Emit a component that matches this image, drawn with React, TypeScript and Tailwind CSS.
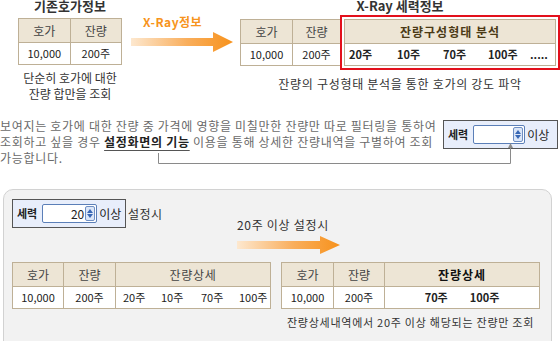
import React from 'react';

const FONT = { fontFamily: '"Noto Sans CJK KR", "Noto Sans", sans-serif' };

function Arrow({ w, h, id }: { w: number; h: number; id: string }) {
  const mid = h / 2;
  const head = 20;
  const shaft = 4;
  return (
    <svg width={w} height={h} viewBox={`0 0 ${w} ${h}`}>
      <defs>
        <linearGradient id={id} x1="0" x2="1" y1="0" y2="0">
          <stop offset="0" stopColor="#fde8cf" />
          <stop offset="0.55" stopColor="#f9ae5c" />
          <stop offset="1" stopColor="#f7921c" />
        </linearGradient>
      </defs>
      <path
        d={`M0 ${mid - shaft} H${w - head} V0 L${w} ${mid} L${w - head} ${h} V${mid + shaft} H0 Z`}
        fill={`url(#${id})`}
      />
    </svg>
  );
}

function Spinner() {
  return (
    <div className="flex h-[15px] w-[10px] shrink-0 flex-col items-center justify-center gap-[1px] rounded-[2px] border border-[#6f8fc4] bg-[#dbe6f8]">
      <svg width="6" height="4" viewBox="0 0 6 4">
        <path d="M0 4 L3 0 L6 4 Z" fill="#3867b5" />
      </svg>
      <svg width="6" height="4" viewBox="0 0 6 4">
        <path d="M0 0 L3 4 L6 0 Z" fill="#3867b5" />
      </svg>
    </div>
  );
}

function Filter({ value, inputW }: { value?: string; inputW: number }) {
  return (
    <div className="flex h-[29px] items-center whitespace-nowrap border border-[#555] bg-[#e8eefb] pl-[4px] text-[11px] text-[#222]">
      <span className="font-bold">세력</span>
      <div
        className="ml-[5px] flex h-[19px] shrink-0 items-center justify-end rounded-[2px] border border-[#5b7fb8] bg-white pr-[1px]"
        style={{ width: inputW }}
      >
        {value && <span className="mr-[1px] text-[12px] leading-none">{value}</span>}
        <Spinner />
      </div>
      <span className="ml-[2px] text-[12px]">이상</span>
    </div>
  );
}

const th = 'h-[24px] border border-[#beb096] bg-[#ede5d5] text-center text-[12px]';
const td = 'h-[22px] border border-[#beb096] bg-white text-center text-[11px] text-[#222]';

export default function App() {
  return (
    <div className="h-[341px] w-[560px] overflow-hidden bg-white text-[#333]" style={FONT}>
      {/* Top comparison */}
      <div className="flex h-[112px] items-start">
        <div className="ml-[18px] flex w-[104px] flex-col items-center">
          <div className="-mt-[4px] h-[22px] text-[13px] font-bold leading-[20px] text-[#333]">기존호가정보</div>
          <table className="border-collapse">
            <thead>
              <tr>
                <th className={`${th} w-[52px] font-normal text-[#444]`}>호가</th>
                <th className={`${th} w-[52px] font-normal text-[#444]`}>잔량</th>
              </tr>
            </thead>
            <tbody>
              <tr>
                <td className={td}>10,000</td>
                <td className={td}>200주</td>
              </tr>
            </tbody>
          </table>
          <div className="mt-[5px] flex flex-col items-center whitespace-nowrap text-[12px] leading-[16px] text-[#333]">
            <span>단순히 호가에 대한</span>
            <span>잔량 합만을 조회</span>
          </div>
        </div>

        <div className="ml-[9px] flex w-[102px] flex-col pt-[14px]">
          <div className="ml-[12px] text-[12px] font-bold leading-[16px] tracking-[0.5px] text-[#f7941d]">X-Ray정보</div>
          <div className="mt-[2px]">
            <Arrow w={102} h={20} id="g1" />
          </div>
        </div>

        <div className="ml-[7px] flex w-[320px] flex-col items-center">
          <div className="-mt-[4px] h-[22px] text-[13px] font-bold leading-[20px] text-[#333]">X-Ray 세력정보</div>
          <div className="-mt-[3px] flex w-full items-center">
            <table className="border-collapse">
              <thead>
                <tr>
                  <th className={`${th} w-[52px] font-normal text-[#444]`}>호가</th>
                  <th className={`${th} w-[48px] font-normal text-[#444]`}>잔량</th>
                </tr>
              </thead>
              <tbody>
                <tr>
                  <td className={td}>10,000</td>
                  <td className={td}>200주</td>
                </tr>
              </tbody>
            </table>
            <div className="-ml-px border-2 border-[#e3101c] p-[2px]">
              <table className="w-[212px] border-collapse">
                <thead>
                  <tr>
                    <th className={`${th} font-bold tracking-[1px] text-[#4b3a16]`}>잔량구성형태 분석</th>
                  </tr>
                </thead>
                <tbody>
                  <tr>
                    <td className={`${td} font-bold`}>
                      <div className="flex pl-[4px]">
                        <span className="w-[48px] text-left">20주</span>
                        <span className="w-[46px] text-left">10주</span>
                        <span className="w-[45px] text-left">70주</span>
                        <span className="w-[42px] text-left">100주</span>
                        <span>.....</span>
                      </div>
                    </td>
                  </tr>
                </tbody>
              </table>
            </div>
          </div>
          <div className="mt-[6px] whitespace-nowrap text-[12px] leading-[16px] tracking-[0.7px] text-[#333]">
            잔량의 구성형태 분석을 통한 호가의 강도 파악
          </div>
        </div>
      </div>

      {/* Explanation */}
      <div className="relative flex h-[54px] items-start pt-[6px]">
        <p className="w-[443px] whitespace-nowrap text-[12px] leading-[16px] tracking-[0.7px] text-[#6a6a6a]">
          보여지는 호가에 대한 잔량 중 가격에 영향을 미칠만한 잔량만 따로 필터링을 통하여
          <br />
          조회하고 싶을 경우{' '}
          <span className="font-bold text-[#222] underline decoration-[#555] underline-offset-[3px]">설정화면의 기능</span>{' '}
          이용을 통해 상세한 잔량내역을 구별하여 조회
          <br />
          가능합니다.
        </p>
        <div className="mt-[2px] w-[115px]">
          <Filter inputW={52} />
        </div>
        <svg className="pointer-events-none absolute left-0 top-0" width="560" height="54">
          <path d="M158.5 41 V51.5 H510.5 V34" fill="none" stroke="#8a8a8a" strokeWidth="1" />
          <path d="M508 36 L510.5 31 L513 36 Z" fill="#8a8a8a" />
        </svg>
      </div>

      {/* Example */}
      <div className="ml-[3px] mt-[23px] h-[170px] w-[549px] rounded-[10px] border border-[#d2d2d2] bg-[#f2f2f2] pl-[8px] pt-[9px]">
        <div className="flex items-start">
          <div className="flex w-[225px] items-center">
            <div className="w-[114px]">
              <Filter value="20" inputW={55} />
            </div>
            <span className="ml-[2px] text-[12px] tracking-[0.5px] text-[#333]">설정시</span>
          </div>
          <div className="mt-[19px] flex flex-col">
            <div className="whitespace-nowrap text-[12px] leading-[14px] tracking-[0.7px] text-[#333]">20주 이상 설정시</div>
            <div className="mt-[4px]">
              <Arrow w={103} h={18} id="g2" />
            </div>
          </div>
        </div>

        <div className="mt-[8px] flex items-start gap-[10px]">
          <table className="border-collapse">
            <thead>
              <tr>
                <th className={`${th} w-[51px] font-normal text-[#444]`}>호가</th>
                <th className={`${th} w-[52px] font-normal text-[#444]`}>잔량</th>
                <th className={`${th} w-[155px] font-normal tracking-[0.75px] text-[#444]`}>잔량상세</th>
              </tr>
            </thead>
            <tbody>
              <tr>
                <td className={td}>10,000</td>
                <td className={td}>200주</td>
                <td className={td}>
                  <div className="flex pl-[7px]">
                    <span className="w-[38px] text-left">20주</span>
                    <span className="w-[40px] text-left">10주</span>
                    <span className="w-[38px] text-left">70주</span>
                    <span>100주</span>
                  </div>
                </td>
              </tr>
            </tbody>
          </table>

          <div className="flex flex-col items-center">
            <table className="border-collapse">
              <thead>
                <tr>
                  <th className={`${th} w-[52px] font-normal text-[#444]`}>호가</th>
                  <th className={`${th} w-[51px] font-normal text-[#444]`}>잔량</th>
                  <th className={`${th} w-[155px] font-bold tracking-[1px] text-[#111]`}>잔량상세</th>
                </tr>
              </thead>
              <tbody>
                <tr>
                  <td className={td}>10,000</td>
                  <td className={td}>200주</td>
                  <td className={`${td} font-bold`}>
                    <div className="flex justify-center gap-[22px]">
                      <span>70주</span>
                      <span>100주</span>
                    </div>
                  </td>
                </tr>
              </tbody>
            </table>
            <div className="mt-[6px] whitespace-nowrap text-[11px] leading-[14px] tracking-[0.75px] text-[#333]">
              잔량상세내역에서 20주 이상 해당되는 잔량만 조회
            </div>
          </div>
        </div>
      </div>
    </div>
  );
}
